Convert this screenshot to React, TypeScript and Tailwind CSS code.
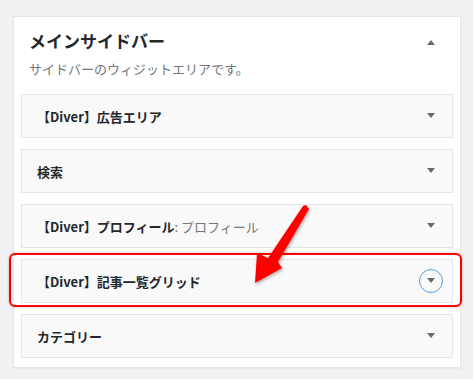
const font = { fontFamily: '"Noto Sans CJK JP", "Noto Sans", sans-serif' }

function Caret({ up = false }: { up?: boolean }) {
  return (
    <svg width="10" height="6" viewBox="0 0 10 6" className="block">
      {up ? (
        <polygon points="1,6 9,6 5,1" fill="#656a70" />
      ) : (
        <polygon points="1,0 9,0 5,5" fill="#656a70" />
      )}
    </svg>
  )
}

type Widget = { title: string; sub?: string; focused?: boolean }

const widgets: Widget[] = [
  { title: '【Diver】広告エリア' },
  { title: '検索' },
  { title: '【Diver】プロフィール', sub: ': プロフィール' },
  { title: '【Diver】記事一覧グリッド', focused: true },
  { title: 'カテゴリー' },
]

function WidgetRow({ w }: { w: Widget }) {
  return (
    <div className="relative h-[44px] border border-[#e5e5e5] bg-[#f9f9f9] flex items-center justify-between pl-[15px] pr-[9px]">
      <div className="text-[13px] leading-5 text-[#23282d] pt-px">
        <span className="font-bold">{w.title}</span>
        {w.sub && <span className="text-[#72777c]">{w.sub}</span>}
      </div>
      <div
        className={
          w.focused
            ? 'w-[24px] h-[24px] rounded-full border-[1.5px] border-[#5b9dd9] flex items-center justify-center'
            : 'w-[24px] h-[24px] flex items-center justify-center'
        }
      >
        <Caret />
      </div>
      {w.focused && (
        <div className="absolute -left-[13px] -right-[10px] -top-[7px] -bottom-[5px] rounded-[6px] border-2 border-[#ff0000] shadow-[0_0_3px_rgba(0,0,0,0.25)] pointer-events-none" />
      )}
    </div>
  )
}

export default function App() {
  return (
    <div className="relative w-[473px] h-[379px] bg-[#f1f1f1] pt-[16px] pl-[13px]" style={font}>
      <div className="w-[448px] h-[352px] bg-white border border-[#e5e5e5] shadow-[0_1px_1px_rgba(0,0,0,0.04)] px-[7px]">
        <div className="relative pl-[8px] pt-[12px]">
          <h2 className="text-[17px] leading-6 font-bold text-[#23282d]">メインサイドバー</h2>
          <p className="mt-[6px] text-[13px] leading-5 text-[#72777c]">サイドバーのウィジットエリアです。</p>
          <div className="absolute right-[10px] top-[22px] w-[24px] flex justify-center">
            <Caret up />
          </div>
        </div>
        <div className="mt-[15px] flex flex-col gap-[11px]">
          {widgets.map((w) => (
            <WidgetRow key={w.title} w={w} />
          ))}
        </div>
      </div>

      {/* red annotation arrow */}
      <svg className="absolute left-0 top-0 pointer-events-none" width="473" height="379">
        <defs>
          <filter id="sh" x="-20%" y="-20%" width="140%" height="140%">
            <feDropShadow dx="1" dy="1.5" stdDeviation="1.5" floodColor="#000" floodOpacity="0.35" />
          </filter>
        </defs>
        <polygon
          points="306,205 309,209 278,262 282,268 255,283 257,253 268,258 303,206"
          fill="#ff0000"
          filter="url(#sh)"
        />
      </svg>
    </div>
  )
}
